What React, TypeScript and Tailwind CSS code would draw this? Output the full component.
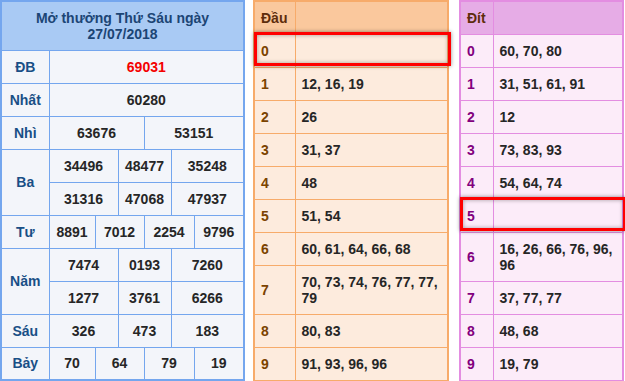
const font = { fontFamily: '"Liberation Sans", Arial, sans-serif' };

type Cell = { v: string; span: number; red?: boolean };
type Prize = { label: string; rows: Cell[][] };

// colgroup: 48 | 46 23 26 27 23 50
const prizes: Prize[] = [
  { label: 'ĐB', rows: [[{ v: '69031', span: 6, red: true }]] },
  { label: 'Nhất', rows: [[{ v: '60280', span: 6 }]] },
  { label: 'Nhì', rows: [[{ v: '63676', span: 3 }, { v: '53151', span: 3 }]] },
  {
    label: 'Ba',
    rows: [
      [{ v: '34496', span: 2 }, { v: '48477', span: 2 }, { v: '35248', span: 2 }],
      [{ v: '31316', span: 2 }, { v: '47068', span: 2 }, { v: '47937', span: 2 }],
    ],
  },
  { label: 'Tư', rows: [[{ v: '8891', span: 1 }, { v: '7012', span: 2 }, { v: '2254', span: 2 }, { v: '9796', span: 1 }]] },
  {
    label: 'Năm',
    rows: [
      [{ v: '7474', span: 2 }, { v: '0193', span: 2 }, { v: '7260', span: 2 }],
      [{ v: '1277', span: 2 }, { v: '3761', span: 2 }, { v: '6266', span: 2 }],
    ],
  },
  { label: 'Sáu', rows: [[{ v: '326', span: 2 }, { v: '473', span: 2 }, { v: '183', span: 2 }]] },
  { label: 'Bảy', rows: [[{ v: '70', span: 1 }, { v: '64', span: 2 }, { v: '79', span: 2 }, { v: '19', span: 1 }]] },
];

const dau = [
  '',
  '12, 16, 19',
  '26',
  '31, 37',
  '48',
  '51, 54',
  '60, 61, 64, 66, 68',
  '70, 73, 74, 76, 77, 77, 79',
  '80, 83',
  '91, 93, 96, 96',
];

const dit = [
  '60, 70, 80',
  '31, 51, 61, 91',
  '12',
  '73, 83, 93',
  '54, 64, 74',
  '',
  '16, 26, 66, 76, 96, 96',
  '37, 77, 77',
  '48, 68',
  '19, 79',
];

function ResultTable() {
  return (
    <table className="w-[243px] border-collapse border-2 border-[#74a6ee] bg-[#f3f5fa] text-[14px] font-bold leading-4 table-fixed">
      <colgroup>
        <col className="w-[48px]" />
        <col className="w-[46px]" />
        <col className="w-[23px]" />
        <col className="w-[26px]" />
        <col className="w-[27px]" />
        <col className="w-[23px]" />
        <col className="w-[50px]" />
      </colgroup>
      <thead>
        <tr className="h-[49px]">
          <th colSpan={7} className="bg-[#a9caf4] border border-[#74a6ee] text-[#1c4575] font-bold text-center">
            Mở thưởng Thứ Sáu ngày
            <br />
            27/07/2018
          </th>
        </tr>
      </thead>
      <tbody>
        {prizes.map((p) =>
          p.rows.map((row, i) => (
            <tr key={p.label + i} className="h-[33px]">
              {i === 0 && (
                <td rowSpan={p.rows.length} className="border border-[#74a6ee] text-center text-[#194f86]">
                  {p.label}
                </td>
              )}
              {row.map((c, j) => (
                <td
                  key={j}
                  colSpan={c.span}
                  className={`border border-[#74a6ee] text-center ${c.red ? 'text-[#f40000]' : 'text-[#262626]'}`}
                >
                  {c.v}
                </td>
              ))}
            </tr>
          )),
        )}
      </tbody>
    </table>
  );
}

function LotoTable({
  title,
  values,
  highlight,
  theme,
}: {
  title: string;
  values: string[];
  highlight: number;
  theme: 'dau' | 'dit';
}) {
  const isDau = theme === 'dau';
  const border = isDau ? 'border-[#f7ab6a]' : 'border-[#e38de1]';
  const head = isDau ? 'bg-[#fac89d]' : 'bg-[#e6ace6]';
  const body = isDau ? 'bg-[#fdebdd]' : 'bg-[#fcecf9]';
  const labelCls = isDau ? 'text-[#7b4300]' : 'text-[#82007e]';
  const labelW = isDau ? 'w-[41px]' : 'w-[33px]';
  return (
    <div className="relative">
      <table className={`w-full border-collapse border-2 ${border} ${body} text-[14px] font-bold leading-4 table-fixed`}>
        <colgroup>
          <col className={labelW} />
          <col />
        </colgroup>
        <thead>
          <tr className="h-[33px]">
            <th className={`${head} border ${border} text-left pl-[6px] text-[#5e2d0c] font-bold`}>{title}</th>
            <th className={`${head} border ${border}`} />
          </tr>
        </thead>
        <tbody>
          {values.map((v, i) => (
            <tr key={i} className="h-[33px]">
              <td className={`border ${border} pl-[6px] ${labelCls}`}>{i}</td>
              <td className={`border ${border} pl-[6px] pr-[4px] py-[8px] text-[#262626]`}>{v}</td>
            </tr>
          ))}
        </tbody>
      </table>
      <div
        className="absolute left-[1px] right-[-2px] h-[34px] border-[3px] border-[#ff0000] shadow-[0_0_4px_rgba(0,0,0,0.45),inset_0_0_4px_rgba(0,0,0,0.35)]"
        style={{ top: 32 + highlight * 33 }}
      />
    </div>
  );
}

export default function App() {
  return (
    <div className="w-[625px] h-[381px] bg-white flex gap-[10px] overflow-hidden" style={font}>
      <div className="w-[243px] shrink-0">
        <ResultTable />
      </div>
      <div className="w-[196px] shrink-0">
        <LotoTable title="Đầu" values={dau} highlight={0} theme="dau" />
      </div>
      <div className="w-[165px] shrink-0">
        <LotoTable title="Đít" values={dit} highlight={5} theme="dit" />
      </div>
    </div>
  );
}
